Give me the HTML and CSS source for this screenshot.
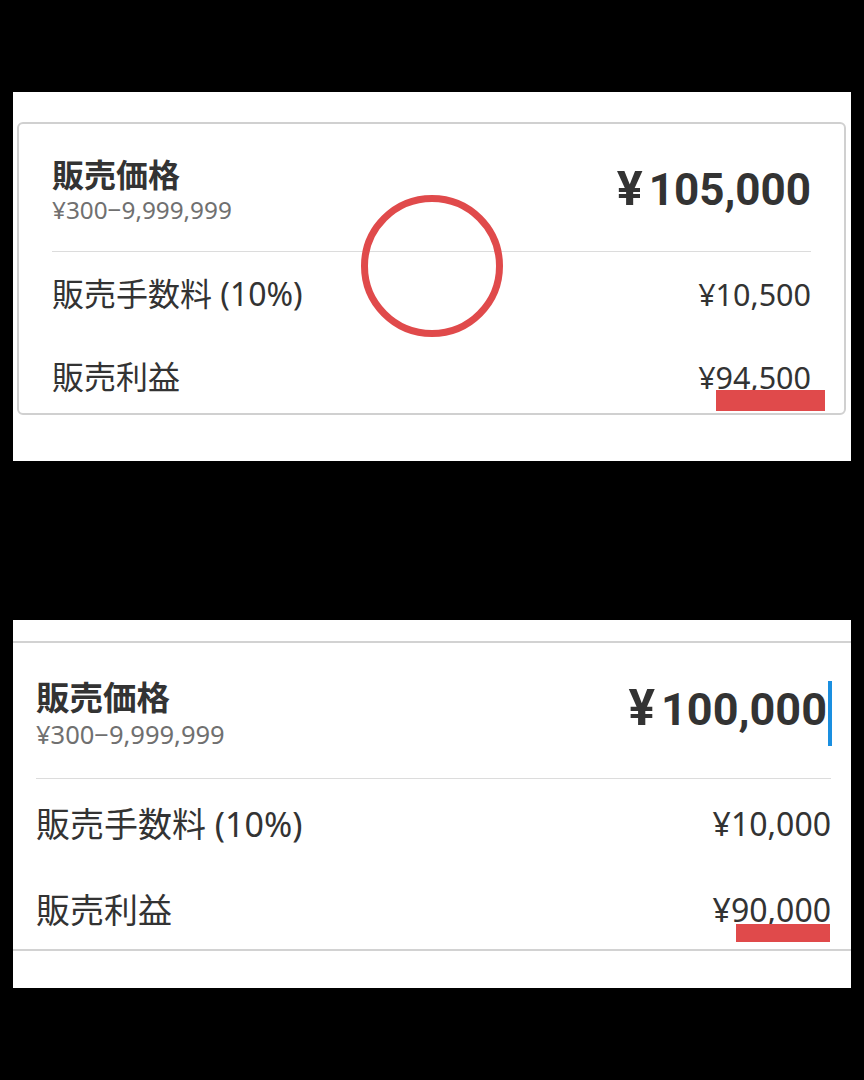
FILE: index.html
```html
<!DOCTYPE html>
<html lang="ja">
<head>
    <meta charset="utf-8">
    <meta name="viewport" content="width=device-width, initial-scale=1">
    <title>販売価格</title>
    <link rel="stylesheet" href="styles.css">
</head>
<body>
    <main>
        <section class="panel panel-before">
            <div class="card">
                <div class="head">
                    <div class="title-block">
                        <div class="title">販売価格</div>
                        <div class="range">¥300−9,999,999</div>
                    </div>
                    <div class="price"><span class="yen">¥</span>105,000</div>
                </div>
                <div class="rows">
                    <div class="row">
                        <div class="label">販売手数料 (10%)</div>
                        <div class="value">¥10,500</div>
                    </div>
                    <div class="row">
                        <div class="label">販売利益</div>
                        <div class="value marked">¥94,500<span class="mark"></span></div>
                    </div>
                </div>
            </div>
            <div class="ring"></div>
        </section>

        <section class="panel panel-after">
            <div class="sheet">
                <div class="head">
                    <div class="title-block">
                        <div class="title">販売価格</div>
                        <div class="range">¥300−9,999,999</div>
                    </div>
                    <div class="price"><span class="yen">¥</span>100,000<span class="caret"></span></div>
                </div>
                <div class="rows">
                    <div class="row">
                        <div class="label">販売手数料 (10%)</div>
                        <div class="value">¥10,000</div>
                    </div>
                    <div class="row">
                        <div class="label">販売利益</div>
                        <div class="value marked">¥90,000<span class="mark"></span></div>
                    </div>
                </div>
            </div>
        </section>
    </main>
</body>
</html>
```

FILE: styles.css
```css
:root {
    font-family: "Noto Sans", "Noto Sans CJK JP", sans-serif;
    color: #333;
}
html, body {
    margin: 0;
    height: 100%;
    background: #000;
}
main {
    padding: 92px 13px 0;
}

.panel {
    position: relative;
    background: #fff;
}

/* first screenshot: bordered card */
.panel-before {
    height: 369px;
    padding: 30px 5px 0 4px;
    box-sizing: border-box;
}
.card {
    border: 2px solid #d0d0d0;
    border-radius: 6px;
    padding: 0 33px;
    height: 293px;
    box-sizing: border-box;
}
.panel-before .head {
    padding: 31px 0 26px;
}
.panel-before .title {
    font-size: 32px;
    line-height: 40px;
}
.panel-before .range {
    font-size: 24.3px;
    line-height: 30px;
}
.panel-before .price {
    font-size: 44px;
}
.panel-before .rows {
    padding: 22px 0 17px;
    gap: 43px;
}
.panel-before .row {
    height: 40px;
    line-height: 40px;
    font-size: 32px;
}
.panel-before .value {
    font-size: 30.5px;
}
.panel-before .mark {
    top: 33px;
    right: -14px;
    width: 109px;
    height: 21px;
}

/* second screenshot: flat sheet */
.panel-after {
    margin-top: 159px;
    height: 368px;
    padding-top: 21px;
    box-sizing: border-box;
}
.sheet {
    border-top: 2px solid #d2d2d2;
    border-bottom: 2px solid #d2d2d2;
    padding: 0 20px 0 23px;
}
.panel-after .head {
    padding: 33px 0 28px;
}
.panel-after .title {
    font-size: 33.5px;
    line-height: 42px;
}
.panel-after .range {
    font-size: 25.5px;
    line-height: 32px;
}
.panel-after .price {
    font-size: 45px;
    margin-right: -1px;
}
.panel-after .rows {
    padding: 24px 0 18px;
    gap: 44px;
}
.panel-after .row {
    height: 42px;
    line-height: 42px;
    font-size: 34px;
}
.panel-after .value {
    font-size: 32px;
}
.panel-after .mark {
    top: 35px;
    right: 1px;
    width: 94px;
    height: 18px;
}

/* shared parts */
.head {
    display: flex;
    justify-content: space-between;
    align-items: center;
    border-bottom: 1px solid #dcdcdc;
}
.title {
    font-weight: bold;
    color: #333;
}
.range {
    color: #707070;
}
.price {
    font-family: Roboto, "Noto Sans CJK JP", sans-serif;
    font-weight: bold;
    color: #333;
    line-height: 50px;
}
.yen {
    display: inline-block;
    font-size: 1.1em;
    line-height: 1;
    margin-right: 6px;
}
.caret {
    display: inline-block;
    width: 4px;
    height: 65px;
    margin-left: 1px;
    background: #1a8fe0;
    vertical-align: middle;
}
.rows {
    display: flex;
    flex-direction: column;
}
.row {
    display: flex;
    justify-content: space-between;
    color: #333;
}
.marked {
    position: relative;
}
.mark {
    position: absolute;
    background: #e04a4b;
}

.ring {
    position: absolute;
    left: 348px;
    top: 103px;
    width: 128px;
    height: 128px;
    border: 7px solid #e04a4b;
    border-radius: 50%;
}
```
